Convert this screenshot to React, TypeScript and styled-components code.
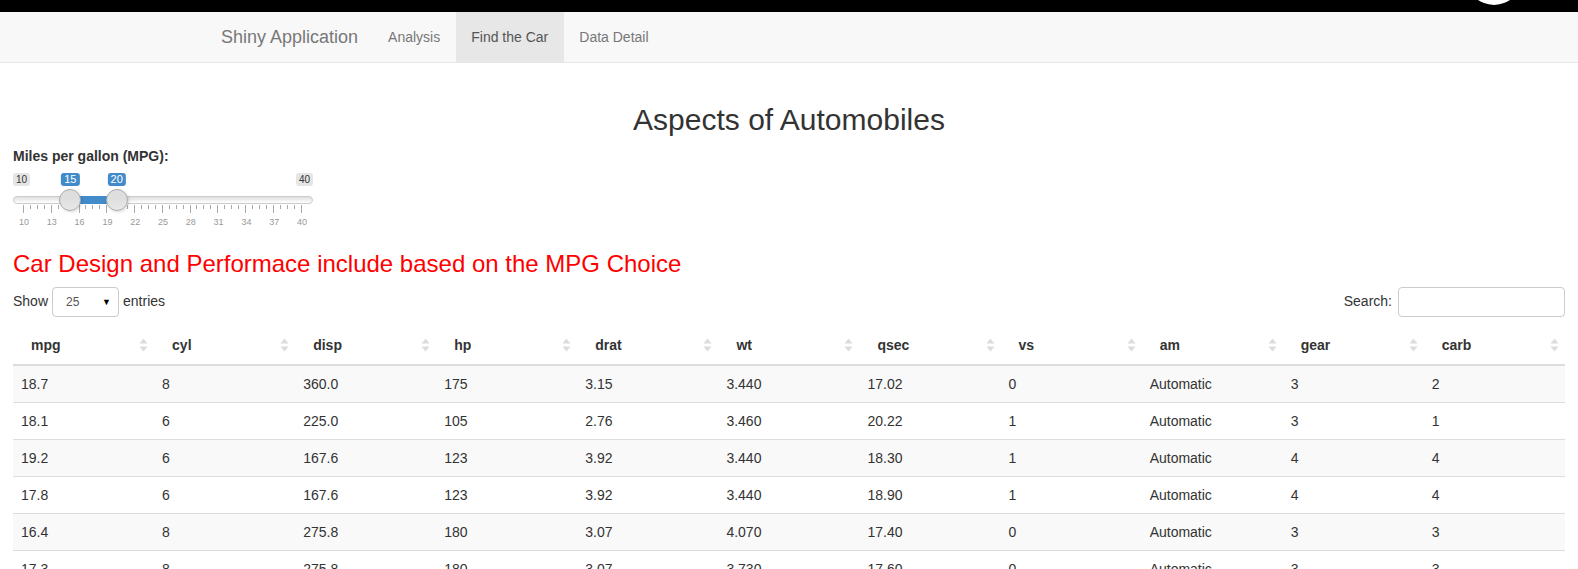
import React from "react";
import styled, { createGlobalStyle } from "styled-components";

const Global = createGlobalStyle`
  html, body { margin: 0; padding: 0; overflow: hidden; background: #fff; }
  body {
    font-family: "Liberation Sans", Arial, Helvetica, sans-serif;
    font-size: 14px;
    line-height: 1.42857;
    color: #333;
  }
  * { box-sizing: border-box; }
`;

const TopBar = styled.div`
  height: 12px;
  background: #000;
  position: relative;
  overflow: hidden;
`;

const TopCircle = styled.div`
  position: absolute;
  left: 1466px;
  top: -51px;
  width: 56px;
  height: 56px;
  border-radius: 50%;
  background: #fff;
`;

const Navbar = styled.nav`
  background: #f8f8f8;
  border-bottom: 1px solid #e7e7e7;
`;

const NavContainer = styled.div`
  width: 1170px;
  margin: 0 auto;
  padding-left: 2px;
  display: flex;
  height: 50px;
`;

const Brand = styled.div`
  padding: 15px;
  font-size: 18px;
  line-height: 20px;
  color: #777;
`;

const NavLink = styled.div<{ $active?: boolean }>`
  padding: 15px 16px 15px 15px;
  line-height: 20px;
  font-size: 14px;
  color: ${(p) => (p.$active ? "#555" : "#777")};
  background: ${(p) => (p.$active ? "#e7e7e7" : "transparent")};
`;

const Main = styled.div`
  display: flow-root;
  padding: 20px 13px 0;
`;

const Title = styled.h2`
  margin: 20px 0 10px;
  font-size: 30px;
  font-weight: 500;
  line-height: 1.1;
  text-align: center;
  color: #333;
`;

const FieldLabel = styled.label`
  display: block;
  font-weight: 700;
  font-size: 14px;
  line-height: 20px;
  margin-bottom: 6px;
`;

const SliderBox = styled.div`
  width: 300px;
  height: 59px;
  padding-top: 1px;
`;

const EdgeRow = styled.div`
  position: relative;
  display: flex;
  justify-content: space-between;
  align-items: flex-start;
  height: 16px;
`;

const EdgeLabel = styled.span`
  font-size: 10px;
  line-height: 11px;
  padding: 1px 3px;
  background: rgba(0, 0, 0, 0.1);
  border-radius: 3px;
  color: #333;
`;

const ValueLabel = styled.span`
  position: absolute;
  top: 0;
  transform: translateX(-50%);
  font-size: 11px;
  line-height: 11px;
  padding: 1px 3px;
  background: #428bca;
  color: #fff;
  border-radius: 3px;
`;

const Track = styled.div`
  position: relative;
  height: 16px;
  padding-top: 7px;
`;

const Line = styled.div`
  height: 8px;
  border: 1px solid #ccc;
  border-radius: 16px;
  background: linear-gradient(to bottom, #dedede 0%, #fff 100%);
`;

const Bar = styled.div`
  position: absolute;
  top: 7px;
  height: 8px;
  background: #428bca;
`;

const Handle = styled.div`
  position: absolute;
  top: 0;
  width: 22px;
  height: 22px;
  margin-left: -11px;
  border: 1px solid #aaa;
  border-radius: 50%;
  background: linear-gradient(to bottom, #dedede 0%, #dedede 40%, #e8e8e8 100%);
  box-shadow: 1px 1px 3px rgba(0, 0, 0, 0.15);
`;

const TickRow = styled.div`
  display: flex;
  justify-content: space-between;
  align-items: flex-start;
  padding: 0 11px 0 10px;
  height: 12px;
`;

const Tick = styled.span<{ $big?: boolean }>`
  width: 1px;
  height: ${(p) => (p.$big ? "8px" : "4px")};
  background: #aaa;
`;

const GridLabels = styled.div`
  display: flex;
  justify-content: space-between;
  padding: 0 11px;
`;

const GridText = styled.span`
  width: 0;
  display: flex;
  justify-content: center;
  white-space: nowrap;
  font-size: 9px;
  line-height: 11px;
  color: #999;
`;

const SubTitle = styled.h3`
  margin: 20px 0 10px;
  font-size: 24px;
  font-weight: 500;
  line-height: 1.1;
  color: #f00;
`;

const Controls = styled.div`
  display: flex;
  justify-content: space-between;
  align-items: center;
  height: 30px;
`;

const LengthGroup = styled.div`
  display: flex;
  align-items: center;
  gap: 4px;
`;

const FakeSelect = styled.div`
  width: 67px;
  height: 30px;
  border: 1px solid #ccc;
  border-radius: 4px;
  display: flex;
  align-items: center;
  justify-content: space-between;
  padding: 0 7px 0 13px;
  font-size: 12px;
  color: #555;
  background: #fff;
`;

const Caret = styled.span`
  font-size: 9px;
  color: #000;
`;

const SearchGroup = styled.label`
  display: flex;
  align-items: center;
  gap: 6px;
`;

const SearchInput = styled.input`
  width: 167px;
  height: 30px;
  border: 1px solid #ccc;
  border-radius: 4px;
  padding: 5px 10px;
  font-size: 12px;
  outline: none;
`;

const Table = styled.table`
  width: 100%;
  margin-top: 6px;
  border-collapse: collapse;
  table-layout: fixed;
`;

const Th = styled.th`
  position: relative;
  text-align: left;
  font-weight: 700;
  padding: 12px 18px 9px;
  line-height: 20px;
  border-bottom: 2px solid #ddd;
`;

const SortIcon = styled.svg`
  position: absolute;
  right: 6px;
  top: 15px;
`;

const Tr = styled.tr<{ $odd?: boolean }>`
  background: ${(p) => (p.$odd ? "#f9f9f9" : "#fff")};
`;

const Td = styled.td`
  padding: 8px;
  line-height: 20px;
  border-top: 1px solid #ddd;
`;

const cols = ["mpg", "cyl", "disp", "hp", "drat", "wt", "qsec", "vs", "am", "gear", "carb"];
const rows = [
  ["18.7", "8", "360.0", "175", "3.15", "3.440", "17.02", "0", "Automatic", "3", "2"],
  ["18.1", "6", "225.0", "105", "2.76", "3.460", "20.22", "1", "Automatic", "3", "1"],
  ["19.2", "6", "167.6", "123", "3.92", "3.440", "18.30", "1", "Automatic", "4", "4"],
  ["17.8", "6", "167.6", "123", "3.92", "3.440", "18.90", "1", "Automatic", "4", "4"],
  ["16.4", "8", "275.8", "180", "3.07", "4.070", "17.40", "0", "Automatic", "3", "3"],
  ["17.3", "8", "275.8", "180", "3.07", "3.730", "17.60", "0", "Automatic", "3", "3"],
];

const pos = (v: number) => 11 + ((v - 10) * 278) / 30;

function Sort() {
  return (
    <SortIcon width="9" height="14" viewBox="0 0 9 14">
      <path d="M4.5 0.5 L8.5 5.5 L0.5 5.5 Z" fill="#dcdcdc" />
      <path d="M4.5 13.5 L8.5 8.5 L0.5 8.5 Z" fill="#dcdcdc" />
    </SortIcon>
  );
}

const bigTicks = [10, 13, 16, 19, 22, 25, 28, 31, 34, 37, 40];

function Slider() {
  const ticks = Array.from({ length: 41 }, (_, i) => i % 4 === 0);
  return (
    <SliderBox>
      <EdgeRow>
        <EdgeLabel>10</EdgeLabel>
        <ValueLabel style={{ left: pos(15) }}>15</ValueLabel>
        <ValueLabel style={{ left: pos(20) }}>20</ValueLabel>
        <EdgeLabel>40</EdgeLabel>
      </EdgeRow>
      <Track>
        <Line />
        <Bar style={{ left: pos(15), width: pos(20) - pos(15) }} />
        <Handle style={{ left: pos(15) }} />
        <Handle style={{ left: pos(20) }} />
      </Track>
      <TickRow>
        {ticks.map((b, i) => (
          <Tick key={i} $big={b} />
        ))}
      </TickRow>
      <GridLabels>
        {bigTicks.map((v) => (
          <GridText key={v}>{v}</GridText>
        ))}
      </GridLabels>
    </SliderBox>
  );
}

export default function App() {
  return (
    <>
      <Global />
      <TopBar>
        <TopCircle />
      </TopBar>
      <Navbar>
        <NavContainer>
          <Brand>Shiny Application</Brand>
          <NavLink>Analysis</NavLink>
          <NavLink $active>Find the Car</NavLink>
          <NavLink>Data Detail</NavLink>
        </NavContainer>
      </Navbar>
      <Main>
        <Title>Aspects of Automobiles</Title>
        <FieldLabel>Miles per gallon (MPG):</FieldLabel>
        <Slider />
        <SubTitle>Car Design and Performace include based on the MPG Choice</SubTitle>
        <Controls>
          <LengthGroup>
            <span>Show</span>
            <FakeSelect>
              <span>25</span>
              <Caret>▼</Caret>
            </FakeSelect>
            <span>entries</span>
          </LengthGroup>
          <SearchGroup>
            Search:
            <SearchInput type="search" />
          </SearchGroup>
        </Controls>
        <Table>
          <thead>
            <tr>
              {cols.map((c) => (
                <Th key={c}>
                  {c}
                  <Sort />
                </Th>
              ))}
            </tr>
          </thead>
          <tbody>
            {rows.map((r, i) => (
              <Tr key={i} $odd={i % 2 === 0}>
                {r.map((c, j) => (
                  <Td key={j}>{c}</Td>
                ))}
              </Tr>
            ))}
          </tbody>
        </Table>
      </Main>
    </>
  );
}
